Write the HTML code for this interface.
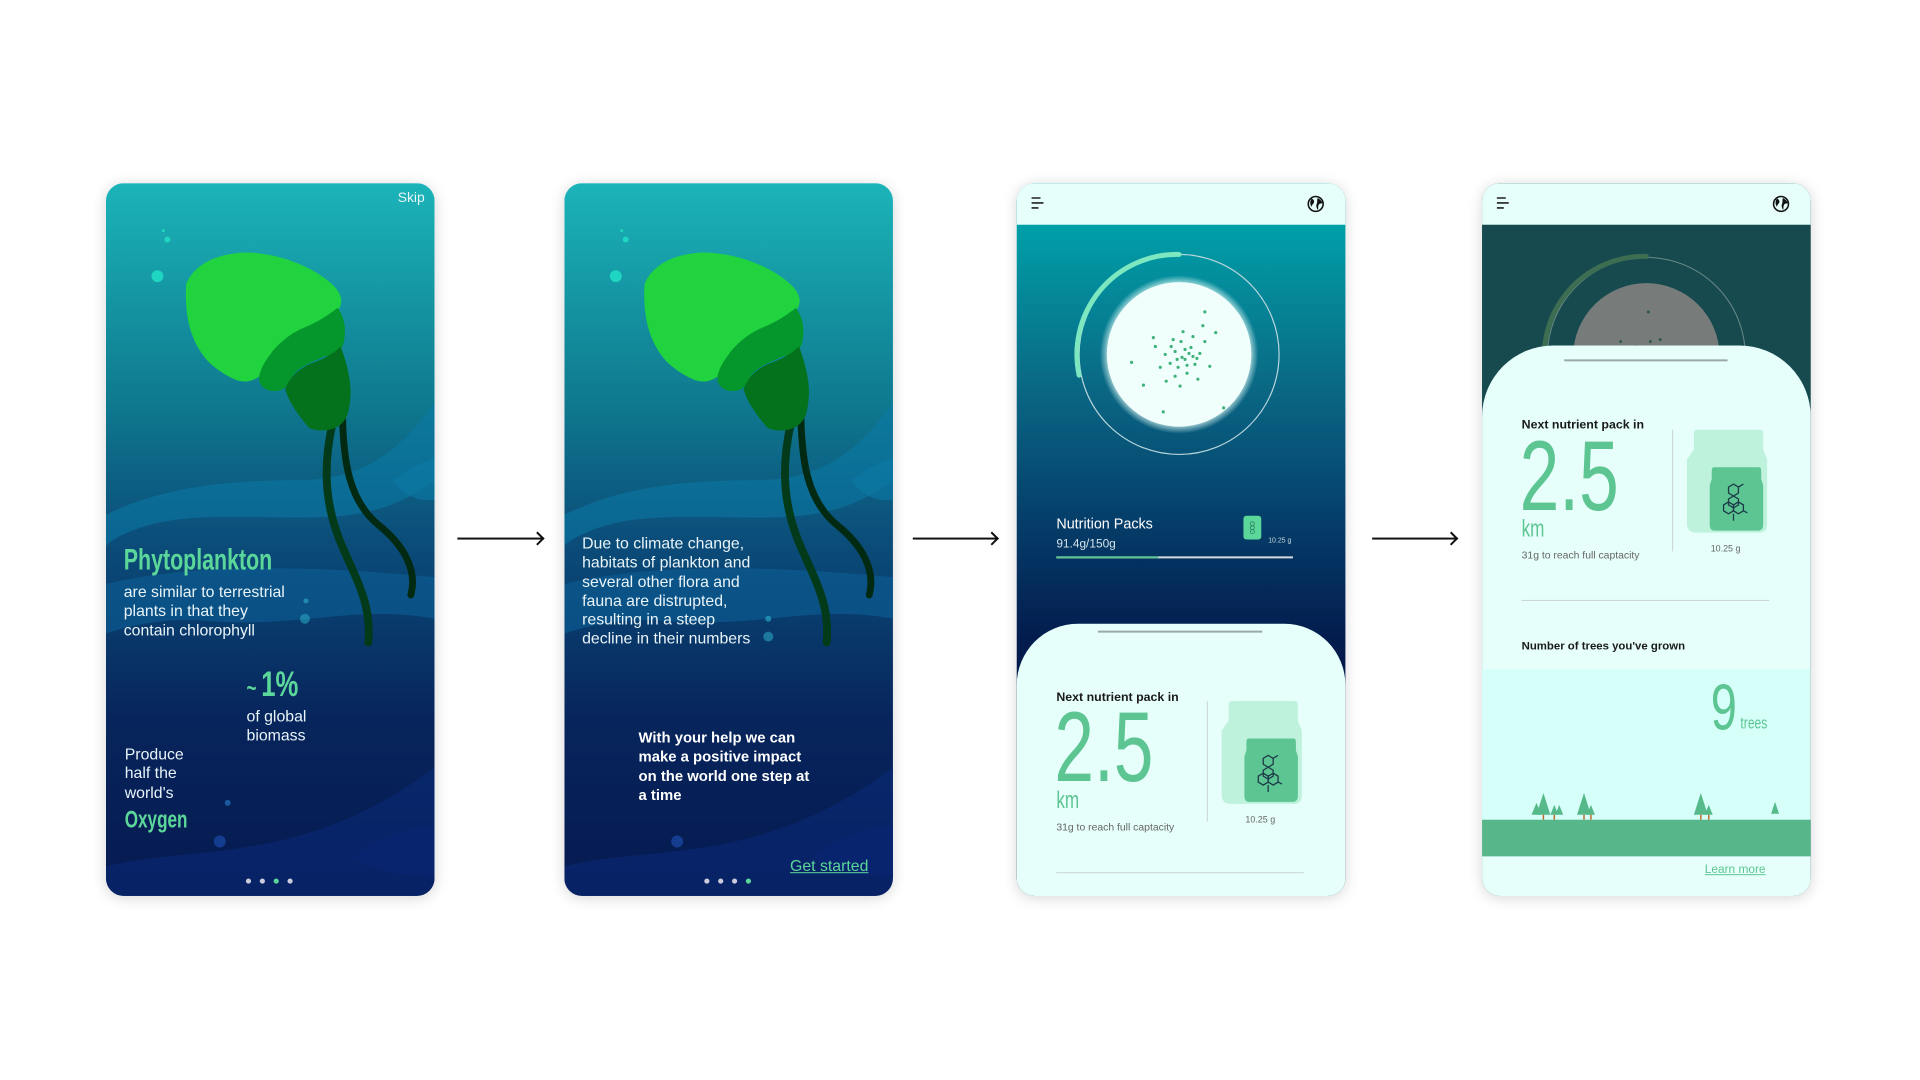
<!DOCTYPE html>
<html><head><meta charset="utf-8"><style>
*{margin:0;padding:0;box-sizing:border-box}
body{width:1920px;height:1080px;background:#fff;position:relative;overflow:hidden;font-family:"Liberation Sans",sans-serif}
#wrap{position:absolute;left:0;top:0;width:1940px;height:1090px;transform:scale(0.99);transform-origin:0 0}
.ph{position:absolute;top:185px;width:332px;height:720px;border-radius:18px;overflow:hidden;box-shadow:0 2px 14px rgba(0,0,0,.16)}
.a{position:absolute;white-space:nowrap}
.cond{display:inline-block;transform:scaleX(.72);transform-origin:left top;font-weight:bold}
.w{color:#e8f4f8;font-size:16px;line-height:19.3px}
.arrow{position:absolute;top:543px;height:2px;background:#111}
.arrow:after{content:"";position:absolute;right:0;top:-4px;width:8px;height:8px;border-right:2px solid #111;border-top:2px solid #111;transform:rotate(45deg);transform-origin:center}
.hdr{position:absolute;left:0;top:0;width:332px;height:42px;background:#e6fffb}
.sheet{position:absolute;left:0;width:332px;background:#e6fffb}
.g{color:#5cc592}
.dk{color:#1a1a1a}
</style></head><body><div id="wrap">

<div class="arrow" style="left:462px;width:86px"></div>
<div class="arrow" style="left:922px;width:85px"></div>
<div class="arrow" style="left:1386px;width:85px"></div>

<!-- phone 1 -->
<div class="ph" style="left:107px">
<svg width="332" height="720" style="position:absolute;left:0;top:0">
<defs><linearGradient id="bg" x1="0" y1="0" x2="0" y2="1">
<stop offset="0" stop-color="#1bb4b9"/><stop offset=".3" stop-color="#0f7b90"/><stop offset=".5" stop-color="#0b4d7a"/><stop offset=".75" stop-color="#07255c"/><stop offset="1" stop-color="#061a50"/></linearGradient></defs>
<rect width="332" height="720" fill="url(#bg)"/>
<path d="M0,335 C60,305 130,300 200,300 C260,298 300,270 332,220 L332,300 C300,325 270,332 240,336 C180,342 100,330 45,345 C25,350 0,362 0,368Z" fill="#0b7aa6" opacity=".55"/>
<path d="M290,300 C310,285 325,280 332,278 L332,320 C315,322 300,315 290,300Z" fill="#0b7aa6" opacity=".6"/>
<path d="M0,405 C80,385 200,385 332,398 L332,440 C250,425 200,450 100,442 C60,438 20,448 0,455Z" fill="#0b5f96" opacity=".6"/>
<path d="M0,690 C90,668 200,690 332,590 L332,720 L0,720Z" fill="#0a2d80" opacity=".45"/>
<path d="M250,680 C280,660 310,650 332,650 L332,700 C300,700 270,695 250,680Z" fill="#092572" opacity=".7"/>
<circle cx="52" cy="94" r="6" fill="#1fd6c2"/><circle cx="62" cy="57" r="3" fill="#1fd6c2"/><circle cx="58" cy="48" r="1.5" fill="#1fd6c2"/>
<circle cx="202" cy="422" r="2.5" fill="#2aa4c0" opacity=".7"/><circle cx="201" cy="440" r="5" fill="#2aa4c0" opacity=".6"/><circle cx="123" cy="626" r="3" fill="#1a5aa0"/><circle cx="115" cy="665" r="6" fill="#153d8f"/>
<path d="M229,242 C218,290 222,330 240,370 C258,410 268,430 265,464" fill="none" stroke="#033a1a" stroke-width="8" stroke-linecap="round"/>
<path d="M239,237 C240,280 245,320 275,345 C300,365 315,390 308,416" fill="none" stroke="#022a13" stroke-width="7" stroke-linecap="round"/>
<path d="M81,102 C90,80 115,71 140,70 C170,70 205,82 226,100 C238,110 241,120 234,129 C215,160 180,185 157,194 C148,200 142,202 132,199 C115,192 102,180 99,175 C88,160 79,140 81,102Z" fill="#21d33f"/>
<path d="M234,126 C241,135 244,150 239,165 C234,172 227,174 221,175 C205,182 195,186 189,194 C184,202 182,210 170,210 C160,210 153,203 155,194 C158,182 165,175 168,170 C178,158 190,150 200,146 C215,140 225,133 234,126Z" fill="#05972b"/>
<path d="M237,165 C243,180 248,200 247,215 C246,230 244,240 234,246 C222,252 210,250 205,247 C195,235 185,222 181,208 C186,195 195,188 205,183 C220,178 230,172 237,165Z" fill="#04721c"/>
</svg>
<div class="a" style="right:10px;top:6px;color:#e8f4f8;font-size:14px">Skip</div>
<div class="a" style="left:18px;top:364px;font-size:30px;color:#5cd79a"><span class="cond">Phytoplankton</span></div>
<div class="a w" style="left:18px;top:404px">are similar to terrestrial<br>plants in that they<br>contain chlorophyll</div>
<div class="a" style="left:142px;top:485px;font-size:36px;color:#5cd79a"><span class="cond"><span style="font-size:24px">~ </span>1%</span></div>
<div class="a w" style="left:142px;top:530px">of global<br>biomass</div>
<div class="a w" style="left:19px;top:568px">Produce<br>half the<br>world's</div>
<div class="a" style="left:19px;top:630px;font-size:24px;color:#5cd79a"><span class="cond">Oxygen</span></div>
<svg class="a" style="left:138px;top:699px" width="56" height="12"><circle cx="6" cy="6" r="2.6" fill="#ccd"/><circle cx="20" cy="6" r="2.6" fill="#ccd"/><circle cx="34" cy="6" r="2.6" fill="#5cd79a"/><circle cx="48" cy="6" r="2.6" fill="#ccd"/></svg>
</div>

<!-- phone 2 -->
<div class="ph" style="left:570px">
<svg width="332" height="720" style="position:absolute;left:0;top:0">
<rect width="332" height="720" fill="url(#bg)"/>
<path d="M0,335 C60,305 130,300 200,300 C260,298 300,270 332,220 L332,300 C300,325 270,332 240,336 C180,342 100,330 45,345 C25,350 0,362 0,368Z" fill="#0b7aa6" opacity=".55"/>
<path d="M290,300 C310,285 325,280 332,278 L332,320 C315,322 300,315 290,300Z" fill="#0b7aa6" opacity=".6"/>
<path d="M0,405 C80,385 200,385 332,398 L332,440 C250,425 200,450 100,442 C60,438 20,448 0,455Z" fill="#0b5f96" opacity=".6"/>
<path d="M0,690 C90,668 200,690 332,590 L332,720 L0,720Z" fill="#0a2d80" opacity=".45"/>
<path d="M250,680 C280,660 310,650 332,650 L332,700 C300,700 270,695 250,680Z" fill="#092572" opacity=".7"/>
<circle cx="52" cy="94" r="6" fill="#1fd6c2"/><circle cx="62" cy="57" r="3" fill="#1fd6c2"/><circle cx="58" cy="48" r="1.5" fill="#1fd6c2"/>
<circle cx="206" cy="440" r="3" fill="#2aa4c0" opacity=".7"/><circle cx="206" cy="458" r="5" fill="#2aa4c0" opacity=".6"/><circle cx="114" cy="665" r="6" fill="#153d8f"/>
<path d="M229,242 C218,290 222,330 240,370 C258,410 268,430 265,464" fill="none" stroke="#033a1a" stroke-width="8" stroke-linecap="round"/>
<path d="M239,237 C240,280 245,320 275,345 C300,365 315,390 308,416" fill="none" stroke="#022a13" stroke-width="7" stroke-linecap="round"/>
<path d="M81,102 C90,80 115,71 140,70 C170,70 205,82 226,100 C238,110 241,120 234,129 C215,160 180,185 157,194 C148,200 142,202 132,199 C115,192 102,180 99,175 C88,160 79,140 81,102Z" fill="#21d33f"/>
<path d="M234,126 C241,135 244,150 239,165 C234,172 227,174 221,175 C205,182 195,186 189,194 C184,202 182,210 170,210 C160,210 153,203 155,194 C158,182 165,175 168,170 C178,158 190,150 200,146 C215,140 225,133 234,126Z" fill="#05972b"/>
<path d="M237,165 C243,180 248,200 247,215 C246,230 244,240 234,246 C222,252 210,250 205,247 C195,235 185,222 181,208 C186,195 195,188 205,183 C220,178 230,172 237,165Z" fill="#04721c"/>
</svg>
<div class="a w" style="left:18px;top:355px">Due to climate change,<br>habitats of plankton and<br>several other flora and<br>fauna are distrupted,<br>resulting in a steep<br>decline in their numbers</div>
<div class="a" style="left:75px;top:551px;color:#fff;font-size:15px;line-height:19.3px;font-weight:bold">With your help we can<br>make a positive impact<br>on the world one step at<br>a time</div>
<div class="a" style="left:228px;top:682px;color:#5cd79a;font-size:16px;text-decoration:underline">Get started</div>
<svg class="a" style="left:138px;top:699px" width="56" height="12"><circle cx="6" cy="6" r="2.6" fill="#ccd"/><circle cx="20" cy="6" r="2.6" fill="#ccd"/><circle cx="34" cy="6" r="2.6" fill="#ccd"/><circle cx="48" cy="6" r="2.6" fill="#5cd79a"/></svg>
</div>

<!-- phone 3 -->
<div class="ph" style="left:1027px;background:linear-gradient(#00a0a8 42px,#0a6a86 200px,#053e6a 340px,#031c4e 460px,#021848 520px)">
<svg width="332" height="460" style="position:absolute;left:0;top:0">
<defs><radialGradient id="glow"><stop offset=".85" stop-color="#f0fffc"/><stop offset="1" stop-color="#e0fff8" stop-opacity="0"/></radialGradient></defs>
<circle cx="164" cy="173" r="101" fill="none" stroke="#b9d7dc" stroke-width="1.2"/>
<path d="M63,194 A101,101 0 0 1 164,72" fill="none" stroke="#7de8c0" stroke-width="5" stroke-linecap="round"/>
<circle cx="164" cy="173" r="80" fill="url(#glow)"/>
<circle cx="164" cy="173" r="73" fill="#f0fffc"/>
<g fill="#3fb27a">
<circle cx="170" cy="178" r="1.6"/><circle cx="160" cy="170" r="1.6"/><circle cx="176" cy="166" r="1.6"/><circle cx="155" cy="182" r="1.6"/><circle cx="180" cy="183" r="1.6"/><circle cx="166" cy="160" r="1.6"/><circle cx="150" cy="173" r="1.6"/><circle cx="185" cy="172" r="1.6"/><circle cx="172" cy="192" r="1.6"/><circle cx="160" cy="195" r="1.6"/><circle cx="190" cy="160" r="1.6"/><circle cx="145" cy="186" r="1.6"/><circle cx="168" cy="150" r="1.6"/><circle cx="178" cy="155" r="1.6"/><circle cx="158" cy="158" r="1.6"/><circle cx="195" cy="185" r="1.6"/><circle cx="140" cy="165" r="1.6"/><circle cx="183" cy="198" r="1.6"/><circle cx="151" cy="200" r="1.6"/><circle cx="163" cy="186" r="1.6"/><circle cx="174" cy="172" r="1.6"/><circle cx="188" cy="144" r="1.6"/><circle cx="128" cy="204" r="1.6"/><circle cx="116" cy="181" r="1.6"/><circle cx="201" cy="151" r="1.6"/><circle cx="209" cy="227" r="1.6"/><circle cx="190" cy="130" r="1.6"/><circle cx="138" cy="156" r="1.6"/><circle cx="148" cy="231" r="1.6"/><circle cx="165" cy="205" r="1.6"/><circle cx="156" cy="165" r="1.6"/><circle cx="182" cy="177" r="1.6"/>
<circle cx="167" cy="176" r="1.6"/><circle cx="172" cy="184" r="1.6"/><circle cx="162" cy="178" r="1.6"/><circle cx="178" cy="175" r="1.6"/><circle cx="170" cy="168" r="1.6"/>
</g>
</svg>
<div class="hdr"></div>
<svg class="a" style="left:14px;top:13px" width="14" height="14"><path d="M1,2h9M1,7h12M1,12h7" stroke="#222" stroke-width="1.6"/></svg>
<svg class="a" style="left:292px;top:11px" width="20" height="20"><circle cx="10" cy="10" r="7.5" fill="none" stroke="#111" stroke-width="1.6"/><path d="M6,4.5 C8,5.5 9,7 8,9 C7,10.5 6,11 6,13 C4.5,11 3.5,8 6,4.5Z M12,4 C14,5 16,7 17,9 C15,10 14,9 13,11 C12,13 13,15 12,16 C11,14 10,12 11,10 C12,8 11,6 12,4Z" fill="#111"/></svg>
<div class="a" style="left:40px;top:337px;color:#fff;font-size:14.5px">Nutrition Packs</div>
<div class="a" style="left:40px;top:357px;color:#d6e4ea;font-size:12px">91.4g/150g</div>
<svg class="a" style="left:227px;top:335px" width="22" height="26"><rect x="2" y="1" width="18" height="24" rx="3" fill="#5cd79a"/><g fill="none" stroke="#2a7a5c" stroke-width=".8"><circle cx="11" cy="9" r="2"/><circle cx="11" cy="13" r="2"/><circle cx="11" cy="17" r="2"/></g></svg>
<div class="a" style="left:254px;top:358px;color:#c8d6dc;font-size:7px">10.25 g</div>
<div class="a" style="left:40px;top:377px;width:239px;height:2px;background:#d9dde2"></div>
<div class="a" style="left:40px;top:377px;width:103px;height:2px;background:#5cc592"></div>
<div class="sheet" style="top:445px;height:275px;border-radius:62px 62px 0 0"></div>
<div class="a" style="left:82px;top:452px;width:166px;height:2px;background:#9aa8a8"></div>
<div class="a dk" style="left:40px;top:512px;font-size:12.5px;font-weight:bold">Next nutrient pack in</div>
<div class="a g" style="left:38px;top:520px;font-size:100px;line-height:100px"><span class="cond" style="font-weight:normal">2.5</span></div>
<div class="a g" style="left:40px;top:610px;font-size:24px"><span class="cond" style="font-weight:normal">km</span></div>
<div class="a" style="left:40px;top:645px;font-size:10.5px;color:#666">31g to reach full captacity</div>
<div class="a" style="left:192px;top:523px;width:1px;height:122px;background:#c8d4d2"></div>
<svg class="a" style="left:204px;top:523px" width="90" height="110"><path d="M14,0 H76 Q80,0 80,4 V20 L84,30 V96 Q84,103 77,104 H12 Q4,104 3,96 V30 L10,20 V4 Q10,0 14,0Z" fill="#bff2dd"/><path d="M30,38 H76 Q78,38 78,42 V50 L80,56 V96 Q80,102 74,102 H31 Q26,102 26,96 V56 L28,50 V42 Q28,38 30,38Z" fill="#5cc592"/><g fill="none" stroke="#1d3a48" stroke-width="1.3"><polygon points="50,55 55,58 55,64 50,67 45,64 45,58"/><polygon points="50,67 55,70 55,76 50,79 45,76 45,70"/><polygon points="55,73 60,76 60,82 55,85 50,82 50,76"/><polygon points="45,73 50,76 50,82 45,85 40,82 40,76"/><path d="M55,58 L60,55 M50,85 V92 M60,82 L64,84"/></g></svg>
<div class="a" style="left:231px;top:638px;font-size:9px;color:#666">10.25 g</div>
<div class="a" style="left:40px;top:696px;width:250px;height:1px;background:#c8d4d2"></div>
</div>

<!-- phone 4 -->
<div class="ph" style="left:1497px;background:#174a4f">
<svg width="332" height="200" style="position:absolute;left:0;top:0">
<circle cx="166" cy="175" r="100" fill="none" stroke="#6a8a88" stroke-width="1"/>
<path d="M65,196 A101,101 0 0 1 166,74" fill="none" stroke="#3e6e52" stroke-width="5" stroke-linecap="round"/>
<circle cx="166" cy="175" r="74" fill="#777c7a"/>
<g fill="#2e5a44"><circle cx="168" cy="130" r="1.5"/><circle cx="140" cy="160" r="1.5"/><circle cx="155" cy="165" r="1.5"/><circle cx="170" cy="160" r="1.5"/><circle cx="180" cy="158" r="1.5"/><circle cx="160" cy="172" r="1.5"/><circle cx="175" cy="168" r="1.5"/><circle cx="190" cy="170" r="1.5"/><circle cx="143" cy="172" r="1.5"/></g>
</svg>
<div class="hdr"></div>
<svg class="a" style="left:14px;top:13px" width="14" height="14"><path d="M1,2h9M1,7h12M1,12h7" stroke="#222" stroke-width="1.6"/></svg>
<svg class="a" style="left:292px;top:11px" width="20" height="20"><circle cx="10" cy="10" r="7.5" fill="none" stroke="#111" stroke-width="1.6"/><path d="M6,4.5 C8,5.5 9,7 8,9 C7,10.5 6,11 6,13 C4.5,11 3.5,8 6,4.5Z M12,4 C14,5 16,7 17,9 C15,10 14,9 13,11 C12,13 13,15 12,16 C11,14 10,12 11,10 C12,8 11,6 12,4Z" fill="#111"/></svg>
<div class="sheet" style="top:164px;height:556px;border-radius:72px 72px 0 0"></div>
<div class="a" style="left:83px;top:178px;width:165px;height:2px;background:#9aa8a8"></div>
<div class="a dk" style="left:40px;top:237px;font-size:12.5px;font-weight:bold">Next nutrient pack in</div>
<div class="a g" style="left:38px;top:246px;font-size:100px;line-height:100px"><span class="cond" style="font-weight:normal">2.5</span></div>
<div class="a g" style="left:40px;top:336px;font-size:24px"><span class="cond" style="font-weight:normal">km</span></div>
<div class="a" style="left:40px;top:370px;font-size:10.5px;color:#666">31g to reach full captacity</div>
<div class="a" style="left:192px;top:249px;width:1px;height:123px;background:#c8d4d2"></div>
<svg class="a" style="left:204px;top:249px" width="90" height="110"><path d="M14,0 H76 Q80,0 80,4 V20 L84,30 V96 Q84,103 77,104 H12 Q4,104 3,96 V30 L10,20 V4 Q10,0 14,0Z" fill="#bff2dd"/><path d="M30,38 H76 Q78,38 78,42 V50 L80,56 V96 Q80,102 74,102 H31 Q26,102 26,96 V56 L28,50 V42 Q28,38 30,38Z" fill="#5cc592"/><g fill="none" stroke="#1d3a48" stroke-width="1.3"><polygon points="50,55 55,58 55,64 50,67 45,64 45,58"/><polygon points="50,67 55,70 55,76 50,79 45,76 45,70"/><polygon points="55,73 60,76 60,82 55,85 50,82 50,76"/><polygon points="45,73 50,76 50,82 45,85 40,82 40,76"/><path d="M55,58 L60,55 M50,85 V92 M60,82 L64,84"/></g></svg>
<div class="a" style="left:231px;top:364px;font-size:9px;color:#666">10.25 g</div>
<div class="a" style="left:40px;top:421px;width:250px;height:1px;background:#c8d4d2"></div>
<div class="a dk" style="left:40px;top:462px;font-size:11.5px;font-weight:bold">Number of trees you've grown</div>
<div class="a" style="left:0;top:491px;width:332px;height:152px;background:#d6fff9"></div>
<div class="a g" style="left:231px;top:496px;font-size:66px;line-height:66px"><span class="cond" style="font-weight:normal">9</span></div>
<div class="a g" style="left:261px;top:536px;font-size:17px"><span class="cond" style="font-weight:normal">trees</span></div>
<svg class="a" style="left:0;top:610px" width="332" height="34"><g fill="#56b98a"><polygon points="62,6 55,28 69,28"/><polygon points="55,16 50,28 60,28"/><polygon points="73,18 69,28 77,28"/><polygon points="78,18 74,28 82,28"/><polygon points="103,6 96,28 110,28"/><polygon points="110,18 106,28 114,28"/><polygon points="221,6 214,28 228,28"/><polygon points="229,18 225,28 233,28"/><polygon points="296,15 292,27 300,27"/></g><g stroke="#c0682a" stroke-width="1.5"><path d="M62,28v5M103,28v5M221,28v5M229,28v5M73,28v5M110,28v5"/></g></svg>
<div class="a" style="left:0;top:643px;width:332px;height:37px;background:#58b68b"></div>
<div class="a" style="left:225px;top:686px;font-size:12px;color:#5cc592;text-decoration:underline">Learn more</div>
</div>

</div></body></html>
